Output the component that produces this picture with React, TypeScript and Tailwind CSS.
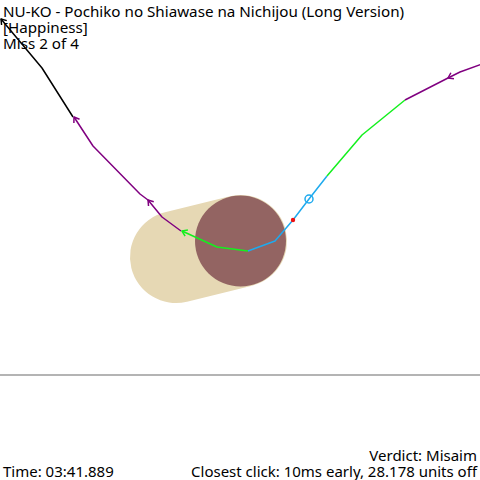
type Pt = [number, number];

const FONT = { fontFamily: '"Segoe UI", "Noto Sans", "Open Sans", sans-serif' };

// one run of the cursor trail, drawn in a single colour
type Run = { color: string; points: Pt[]; arrows: number[] };

const runs: Run[] = [
  { color: "#000000", points: [[73, 117], [42, 68], [1, 19]], arrows: [2] },
  {
    color: "#800080",
    points: [[181, 231], [162, 217], [148, 200], [140, 194], [93, 146], [74, 117]],
    arrows: [2, 5],
  },
  { color: "#14f01e", points: [[248, 251], [217, 247], [182, 231]], arrows: [2] },
  {
    color: "#1eaaee",
    points: [[327, 176], [309, 199], [293, 220], [275, 241], [248, 251]],
    arrows: [],
  },
  { color: "#14f01e", points: [[405, 100], [362, 135], [327, 176]], arrows: [] },
  {
    color: "#800080",
    points: [[482, 64], [460, 72], [448, 78], [405, 100]],
    arrows: [0, 2],
  },
];

function arrowHead(tip: Pt, from: Pt) {
  const dx = tip[0] - from[0];
  const dy = tip[1] - from[1];
  const len = Math.hypot(dx, dy) || 1;
  const ux = dx / len;
  const uy = dy / len;
  const size = 6;
  const a = 0.6;
  const arm = (s: number): Pt => {
    const c = Math.cos(s * a);
    const n = Math.sin(s * a);
    const rx = ux * c - uy * n;
    const ry = ux * n + uy * c;
    return [tip[0] - rx * size, tip[1] - ry * size];
  };
  const l = arm(1);
  const r = arm(-1);
  return `M${l[0]},${l[1]} L${tip[0]},${tip[1]} L${r[0]},${r[1]}`;
}

function Trail() {
  return (
    <svg className="absolute inset-0" width={480} height={374} viewBox="0 0 480 374">
      {/* slider body */}
      <line
        x1={176}
        y1={257}
        x2={241}
        y2={241}
        stroke="#e6d8b4"
        strokeWidth={92}
        strokeLinecap="round"
      />
      <circle cx={240.5} cy={241} r={45.5} fill="#936462" />
      {runs.map((run, i) => (
        <g key={i} stroke={run.color} strokeWidth={1.5} fill="none" strokeLinejoin="round">
          <polyline points={run.points.map((p) => p.join(",")).join(" ")} />
          {run.arrows.map((idx) => {
            const tip = run.points[idx];
            const from = idx === 0 ? run.points[1] : run.points[idx - 1];
            const fixedFrom: Pt =
              idx === 0 ? [2 * tip[0] - from[0], 2 * tip[1] - from[1]] : from;
            return <path key={idx} d={arrowHead(tip, fixedFrom)} />;
          })}
        </g>
      ))}
      <circle cx={309} cy={199} r={4} stroke="#1eaaee" strokeWidth={1.5} fill="none" />
      <circle cx={293} cy={220} r={2.2} fill="#ee1111" />
    </svg>
  );
}

export default function App() {
  return (
    <div className="flex h-[480px] w-[480px] flex-col bg-white text-black" style={FONT}>
      <div className="relative h-[374px]">
        <div className="relative z-10 px-[3px] pt-[3px] text-[15.2px] leading-[16px]">
          <div>NU-KO - Pochiko no Shiawase na Nichijou (Long Version)</div>
          <div>[Happiness]</div>
          <div>Miss 2 of 4</div>
        </div>
        <Trail />
      </div>
      <div className="h-[2px] bg-[#b4b4b4]" />
      <div className="flex flex-1 items-end justify-between px-[3px] pb-[1px] text-[15px] leading-[16px]">
        <div>Time: 03:41.889</div>
        <div className="text-right">
          <div>Verdict: Misaim</div>
          <div>Closest click: 10ms early, 28.178 units off</div>
        </div>
      </div>
    </div>
  );
}
